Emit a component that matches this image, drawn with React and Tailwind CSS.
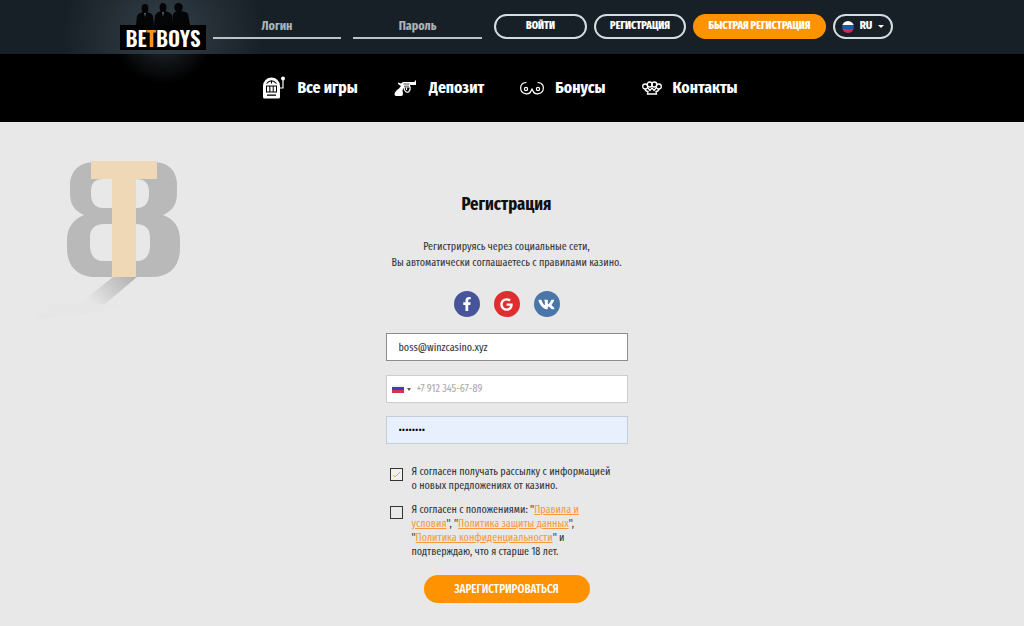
import { useState } from 'react';
import { FaFacebookF, FaVk, FaGoogle } from 'react-icons/fa';

function Logo() {
  return (
    <a href="/" aria-label="BetBoys" className="flex w-[86px] shrink-0 flex-col items-center">
      <svg viewBox="0 0 56 22" className="h-[22px] w-[56px]" fill="#030506">
        <ellipse cx="10" cy="5.500" rx="3.400" ry="4.500" />
        <path d="M1 22l1-9q1-3 6-4h4q5 1 6 4l1 9z" />
        <ellipse cx="28" cy="4.500" rx="3.400" ry="4.500" />
        <path d="M19 22l1-10q2-3 6-4h4q5 1 7 4l1 10z" />
        <ellipse cx="43.500" cy="4.500" rx="4.200" ry="4.500" />
        <path d="M37 22l1-11q2-3 5-3h3q6 1 7 3l2 11z" />
        <path d="M9 10l1 4 1-4zM27 9l1 5 1-5z" fill="#59636b" />
      </svg>
      <span className="flex h-[25px] w-full items-center justify-center bg-black font-['Oswald','Roboto_Condensed',Roboto,sans-serif] text-[21px] font-semibold leading-none text-white">
        BE<span className="text-[#f7931e]">T</span>BOYS
      </span>
    </a>
  );
}

function SlotIcon() {
  return (
    <svg viewBox="0 0 24 24" className="size-6" fill="#fff">
      <path d="M1 21V10a8.500 8.500 0 0 1 17 0v11q0 1.500-1.500 1.500h-14Q1 22.500 1 21z" />
      <path d="M4.500 7.500q5-5.500 10 0M9.500 4.500v3" fill="none" stroke="#000" strokeWidth="1.100" />
      <path d="M4 9.500h11v7H4z" fill="#000" />
      <path d="M5 10.500h2.300v5H5zM8.400 10.500h2.300v5H8.400zM11.700 10.500H14v5h-2.300z" />
      <path d="M5 18.500h9v1.300H5z" fill="#000" />
      <path d="M18 12h3V4" fill="none" stroke="#fff" strokeWidth="1.200" />
      <circle cx="21" cy="2.500" r="2" />
    </svg>
  );
}

function GunIcon() {
  return (
    <svg viewBox="0 0 24 24" className="size-6" fill="#fff">
      <path d="M4 6.500l3 1 2-1.500h11.500L21 4.500h1V9h-6v2.500h-6L8.500 14 9 18q0 2-2 2H2q-1.500 0-1.500-2 .500-3 4.500-5.500l2-2.500-3-2z" />
      <path d="M9.500 8h6M10 10.200h5" fill="none" stroke="#000" strokeWidth=".7" />
      <path d="M10 11l.500 3q2 3.500 4.500 1.500 1.500-1.500 1.200-5M12.500 11.500v2.500" fill="none" stroke="#fff" strokeWidth="1.200" />
    </svg>
  );
}

function BonusIcon() {
  return (
    <svg viewBox="0 0 24 16" className="h-4 w-6" fill="none" stroke="#fff" strokeWidth="1.200" strokeLinecap="round">
      <path d="M6 2.500C1 3 .500 6.500.700 8.500 1 14.500 9.500 15.500 11 11l1-2 1 2c1.500 4.500 10 3.500 10.300-2.500.200-2-.300-5.500-5.300-6" />
      <circle cx="6" cy="9" r="1.600" />
      <circle cx="18" cy="9" r="1.600" />
    </svg>
  );
}

function KnucklesIcon() {
  return (
    <svg viewBox="0 0 20 16" className="h-4 w-5" fill="none" stroke="#fff" strokeWidth="1.300">
      <circle cx="3.200" cy="6.500" r="2.500" />
      <circle cx="7.700" cy="4.500" r="2.500" />
      <circle cx="12.300" cy="4.500" r="2.500" />
      <circle cx="16.800" cy="6.500" r="2.500" />
      <path d="M3 9q.500 2.500 3 2.500L5.500 14h9L14 11.500q2.500 0 3-2.500M6 8l2 2.500L10 8l2 2.500L14 8" />
    </svg>
  );
}

const nav = [
  { label: 'Все игры', icon: <SlotIcon /> },
  { label: 'Депозит', icon: <GunIcon /> },
  { label: 'Бонусы', icon: <BonusIcon /> },
  { label: 'Контакты', icon: <KnucklesIcon /> },
];

function Header() {
  return (
    <header>
      <div className="flex h-[54px] justify-center bg-[#182027] bg-radial-[circle_100px_at_163px_35px] from-[#343f47] to-[#182027] pr-[11px]">
        <div className="flex items-start">
          <div className="pt-[3px]">
            <Logo />
          </div>
          <form className="flex gap-3 pl-[7px] pt-[14px]" onSubmit={(e) => e.preventDefault()}>
            <input
              type="text"
              aria-label="Логин"
              placeholder="Логин"
              className="h-[25px] w-[128px] border-b-2 border-[#b9c3c8] text-center text-[13px] font-bold text-white placeholder:text-[#abb3b8]"
            />
            <input
              type="password"
              aria-label="Пароль"
              placeholder="Пароль"
              className="h-[25px] w-[129px] border-b-2 border-[#b9c3c8] text-center text-[13px] font-bold text-white placeholder:text-[#abb3b8]"
            />
            <button type="submit" className="h-[25px] w-[93px] rounded-full border-2 border-[#d5dde1] text-[11px] font-extrabold text-white">
              ВОЙТИ
            </button>
          </form>
          <div className="flex gap-[7px] pl-[7px] pt-[14px] text-[11px] font-extrabold text-white">
            <button className="h-[25px] w-[92px] rounded-full border-2 border-[#d5dde1]">РЕГИСТРАЦИЯ</button>
            <button className="h-[25px] w-[133px] rounded-full bg-[#ff9200]">БЫСТРАЯ РЕГИСТРАЦИЯ</button>
            <button className="flex h-[25px] w-[60px] items-center justify-center gap-[6px] rounded-full border-2 border-[#d5dde1]">
              <svg viewBox="0 0 12 12" className="size-3">
                <clipPath id="round">
                  <circle cx="6" cy="6" r="6" />
                </clipPath>
                <g clipPath="url(#round)">
                  <path d="M0 0h12v4H0z" fill="#fff" />
                  <path d="M0 4h12v4H0z" fill="#1d55b5" />
                  <path d="M0 8h12v4H0z" fill="#d62750" />
                </g>
              </svg>
              <span className="font-['Fira_Sans_Condensed','Roboto_Condensed',sans-serif]">RU</span>
              <span className="border-x-3 border-t-3 border-x-transparent border-t-white" />
            </button>
          </div>
        </div>
      </div>
      <nav className="flex h-[68px] items-center justify-center gap-9 bg-black bg-radial-[circle_50px_at_163px_-20px] from-[#262f33] to-black pr-6">
        {nav.map((item) => (
          <a key={item.label} href="#" className="flex items-center gap-[11px] text-[17px] font-bold text-white">
            {item.icon}
            {item.label}
          </a>
        ))}
      </nav>
    </header>
  );
}

function Watermark() {
  return (
    <svg viewBox="0 0 150 165" className="absolute left-[35px] top-[155px] h-[165px] w-[150px]">
      <defs>
        <linearGradient id="shade" gradientUnits="userSpaceOnUse" x1="95" y1="120" x2="62" y2="152">
          <stop offset="0" stopColor="#b3b3b3" />
          <stop offset="1" stopColor="#e6e6e6" />
        </linearGradient>
      </defs>
      <path d="M78 122h24L70 149H44z" fill="url(#shade)" />
      <path d="M18 149h67l-20 8-52 6-13 2z" fill="#e6e6e6" />
      <path
        fillRule="evenodd"
        fill="#b9b9b9"
        d="M60 7h58c16 0 24 9 24 24v7c0 12-5 18-14 22 11 4 17 12 17 25v8c0 19-11 29-28 29H61c-18 0-29-10-29-29v-8c0-13 7-21 17-25-9-4-14-10-14-22v-7C35 16 44 7 60 7zM68 24h33c8 0 13 4 13 12v4c0 7-4 13-12 13H68c-8 0-12-6-12-13v-4c0-8 4-12 12-12zM69 69h32c9 0 14 5 14 13v9c0 9-5 15-13 15H68c-8 0-13-6-13-15v-9c0-8 5-13 14-13z"
      />
      <path d="M56 6h66v18h-21v98H77V24H56z" fill="#eed8b6" />
    </svg>
  );
}

function App() {
  const [email, setEmail] = useState('boss@winzcasino.xyz');
  const [phone, setPhone] = useState('');
  const [password, setPassword] = useState('password');

  return (
    <div className="relative min-h-screen bg-[#e8e8e8] font-['Fira_Sans_Extra_Condensed','Roboto_Condensed',Roboto,sans-serif] text-[#33373b]">
      <Header />
      <Watermark />
      <main className="flex flex-col items-center pb-5 pr-[11px] pt-[70px]">
        <h1 className="text-[18px] leading-6 font-bold text-[#111]">Регистрация</h1>
        <p className="mt-[23px] text-center text-[11px] leading-4">
          Регистрируясь через социальные сети,
          <br />
          Вы автоматически соглашаетесь с правилами казино.
        </p>
        <div className="mt-5 flex gap-[14px] text-white">
          <button aria-label="Facebook" className="flex size-[26px] items-center justify-center rounded-full bg-[#47549a]">
            <FaFacebookF size={14} />
          </button>
          <button aria-label="Google" className="flex size-[26px] items-center justify-center rounded-full bg-[#e02d2f]">
            <FaGoogle size={13} />
          </button>
          <button aria-label="VK" className="flex size-[26px] items-center justify-center rounded-full bg-[#4a76a8]">
            <FaVk size={17} />
          </button>
        </div>
        <form className="mt-4 flex w-[242px] flex-col text-[11px]" onSubmit={(e) => e.preventDefault()}>
          <input
            type="email"
            aria-label="Email"
            value={email}
            onChange={(e) => setEmail(e.target.value)}
            className="h-7 border border-[#8c8c8c] bg-white px-3"
          />
          <div className="mt-[14px] flex h-7 items-center border border-[#c9ced3] bg-white pl-[5px]">
            <button type="button" aria-label="Россия +7" className="flex items-center gap-[3px]">
              <span className="flex h-2 w-3 flex-col">
                <span className="h-[2px] bg-[#f2f2f2]" />
                <span className="h-[3px] bg-[#3b3bc4]" />
                <span className="h-[3px] bg-[#d3344d]" />
              </span>
              <span className="border-x-2 border-t-3 border-x-transparent border-t-[#555]" />
            </button>
            <input
              type="tel"
              aria-label="Телефон"
              placeholder="+7 912 345-67-89"
              value={phone}
              onChange={(e) => setPhone(e.target.value)}
              className="ml-[6px] min-w-0 flex-1 placeholder:text-[#a9a9a9]"
            />
          </div>
          <input
            type="password"
            aria-label="Пароль"
            value={password}
            onChange={(e) => setPassword(e.target.value)}
            className="mt-[13px] h-7 border border-[#c3cedb] bg-[#e8f0fe] px-3 text-black"
          />
          <div className="mt-[21px] flex gap-[9px] pl-1 leading-[14px]">
            <span className="relative mt-[3px] size-[13px] shrink-0">
              <input id="news" type="checkbox" defaultChecked className="peer block size-[13px] appearance-none border border-[#333] bg-[#f1f1ee]" />
              <svg viewBox="0 0 13 13" className="pointer-events-none absolute inset-0 hidden size-[13px] peer-checked:block" fill="none" stroke="#c9b565">
                <path d="M3 7l2 2 5-5" />
              </svg>
            </span>
            <label htmlFor="news" className="whitespace-nowrap">
              Я согласен получать рассылку с информацией
              <br />о новых предложениях от казино.
            </label>
          </div>
          <div className="mt-[10px] flex gap-[9px] pl-1 leading-[14px]">
            <input id="terms" type="checkbox" className="mt-[3px] size-[13px] shrink-0 appearance-none border border-[#333] checked:bg-[#c9b565]" />
            <label htmlFor="terms" className="whitespace-nowrap">
              Я согласен с положениями: "<a href="#" className="text-[#f59a3c] underline">Правила и<br />условия</a>", "
              <a href="#" className="text-[#f59a3c] underline">Политика защиты данных</a>",
              <br />
              "<a href="#" className="text-[#f59a3c] underline">Политика конфиденциальности</a>" и
              <br />
              подтверждаю, что я старше 18 лет.
            </label>
          </div>
          <button type="submit" className="mt-4 h-7 w-[166px] self-center rounded-full bg-[#ff9200] text-[12px] font-medium text-white">
            ЗАРЕГИСТРИРОВАТЬСЯ
          </button>
        </form>
      </main>
    </div>
  );
}

export default App;
